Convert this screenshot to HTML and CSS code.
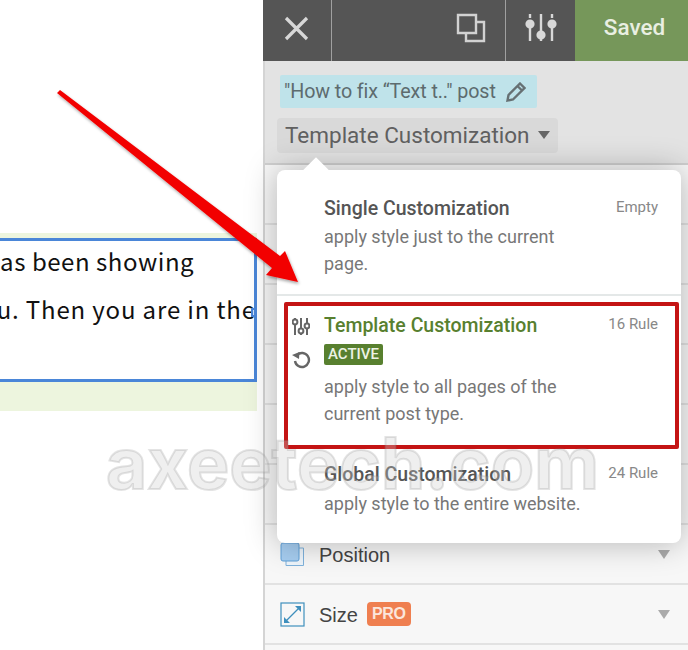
FILE: index.html
```html
<!DOCTYPE html>
<html lang="en">
<head>
    <meta charset="UTF-8">
    <meta name="viewport" content="width=device-width, initial-scale=1.0">
    <title>Template Customization</title>
    <link rel="stylesheet" href="styles.css">
</head>
<body>
    <div class="page">
        <div class="doc">
            <div class="doc-block">
                <div class="doc-box">
                    <p class="doc-line line-one">has been showing</p>
                    <p class="doc-line line-two">you. Then you are in the</p>
                    <span class="doc-handle"></span>
                </div>
            </div>
        </div>

        <div class="panel">
            <div class="topbar">
                <div class="top-btn btn-close">
                    <svg width="26" height="26" viewBox="0 0 26 26"><path d="M3 3 L24 24 M24 3 L3 24" stroke="#d8d8d8" stroke-width="3.2" fill="none"/></svg>
                </div>
                <div class="top-btn btn-layers">
                    <svg width="30" height="30" viewBox="0 0 30 30" fill="none" stroke="#d2d2d2" stroke-width="2.4"><path d="M2 2 H20 V20 H2 Z"/><path d="M20 9 H28 V28 H10 V20"/></svg>
                </div>
                <div class="top-btn btn-sliders">
                    <svg width="32" height="30" viewBox="0 0 32 30" fill="none" stroke="#d8d8d8" stroke-width="2.4"><path d="M5 1 V5 M5 15 V28 M16 1 V19 M16 25 V28 M27 1 V5 M27 15 V28"/><circle cx="5" cy="11" r="3.4" fill="#d8d8d8"/><circle cx="16" cy="22" r="3.4" fill="#d8d8d8"/><circle cx="27" cy="11" r="3.4" fill="#d8d8d8"/></svg>
                </div>
                <div class="btn-saved">Saved</div>
            </div>

            <div class="subhead">
                <div class="post-tag">
                    <span>"How to fix “Text t.." post</span>
                    <svg width="20" height="20" viewBox="0 0 20 20"><path d="M14 1.5 L18.5 6 L7 17.5 L1.5 18.5 L2.5 13 Z M12 4.5 L15.5 8" fill="none" stroke="#667073" stroke-width="2.400"/></svg>
                </div>
                <div class="type-select">
                    <span>Template Customization</span>
                    <i class="tri tri-dark"></i>
                </div>
            </div>

            <div class="rows">
                <div class="row"></div>
                <div class="row"></div>
                <div class="row"></div>
                <div class="row"></div>
                <div class="row"></div>
                <div class="row"></div>
                <div class="row">
                    <svg class="row-icon" width="25" height="25" viewBox="0 0 25 25"><path d="M6 6 H23.5 V23.5 H6 Z" fill="#eef5fb" stroke="#7fb2dc"/><rect x="1" y="1" width="18" height="18" rx="2" fill="#a6cdf0" stroke="#5fa0d8"/></svg>
                    <span class="row-label">Position</span>
                    <i class="tri"></i>
                </div>
                <div class="row">
                    <svg class="row-icon" width="25" height="25" viewBox="0 0 25 25" fill="none" stroke="#3f8fbd"><rect x="1" y="1" width="23" height="23" stroke-width="1.2"/><path d="M4.5 20.5 L20.5 4.5" stroke-width="1.2"/><path d="M4 15 V21 H10 Z M15 4 H21 V10 Z" fill="#3f8fbd" stroke="none"/></svg>
                    <span class="row-label">Size</span>
                    <span class="pro">PRO</span>
                    <i class="tri"></i>
                </div>
                <div class="row"></div>
            </div>

            <div class="menu">
                <span class="menu-caret"></span>
                <div class="menu-item item-single">
                    <div class="item-head">
                        <span class="item-title">Single Customization</span>
                        <span class="item-count">Empty</span>
                    </div>
                    <p class="item-desc">apply style just to the current<br>page.</p>
                </div>
                <div class="menu-item item-template">
                    <div class="item-tools">
                        <svg width="18" height="19" viewBox="0 0 18 19" fill="none" stroke="#666" stroke-width="2"><path d="M3 1 V18 M9 1 V18 M15 1 V18"/><circle cx="3" cy="5" r="2.4" fill="#fff"/><circle cx="9" cy="14" r="2.4" fill="#fff"/><circle cx="15" cy="9" r="2.400" fill="#fff"/></svg>
                        <svg width="19" height="19" viewBox="0 0 19 19" fill="none" stroke="#666" stroke-width="2.4"><path d="M5 5 A7 7 0 1 1 3 11"/><path d="M0 5 L7.500 2 L7 9 Z" fill="#666" stroke="none"/></svg>
                    </div>
                    <div class="item-head">
                        <span class="item-title title-active">Template Customization</span>
                        <span class="item-count">16 Rule</span>
                    </div>
                    <span class="badge">ACTIVE</span>
                    <p class="item-desc desc-active">apply style to all pages of the<br>current post type.</p>
                </div>
                <div class="menu-item item-global">
                    <div class="item-head">
                        <span class="item-title">Global Customization</span>
                        <span class="item-count">24 Rule</span>
                    </div>
                    <p class="item-desc desc-global">apply style to the entire website.</p>
                </div>
            </div>
        </div>

        <div class="red-box"></div>
        <div class="watermark">axeetech.com</div>
        <svg class="arrow" width="688" height="650" viewBox="0 0 688 650">
            <defs>
                <filter id="arrow-shadow" x="-10%" y="-10%" width="120%" height="120%">
                    <feDropShadow dx="1" dy="2" stdDeviation="1.500" flood-color="#000" flood-opacity="0.35"/>
                </filter>
            </defs>
            <path d="M57 93 L60 90 L280 256 L285 251 L298 282 L266 275 L272 268 Z" fill="#f20000" filter="url(#arrow-shadow)"/>
        </svg>
    </div>
</body>
</html>
```

FILE: styles.css
```css
* {
    box-sizing: border-box;
}
body {
    margin: 0;
    background: #fff;
    font-family: Roboto, sans-serif;
    overflow: hidden;
}
p {
    margin: 0;
}
.page {
    position: relative;
    display: flex;
    width: 688px;
    height: 650px;
    overflow: hidden;
}

/* left side, the edited document */
.doc {
    width: 264px;
    padding-top: 233px;
}
.doc-block {
    width: 257px;
    height: 178px;
    padding-top: 5px;
    background: #edf5de;
}
.doc-box {
    position: relative;
    height: 144px;
    background: #fff;
    border: 3px solid #4a86d8;
    border-left: 0;
    overflow: hidden;
}
.doc-line {
    font-family: "Noto Sans CJK KR", "Noto Sans", sans-serif;
    font-size: 24px;
    line-height: 48px;
    letter-spacing: 0.55px;
    color: #111;
    white-space: nowrap;
}
.line-one {
    margin: -4px 0 0 -15px;
}
.line-two {
    margin-left: -32px;
    letter-spacing: 0.85px;
}
.doc-handle {
    position: absolute;
    right: -3px;
    top: 67px;
    width: 6px;
    height: 9px;
    border: 2px solid #4a86d8;
    background: #cfe0f6;
}

/* right side panel */
.panel {
    position: relative;
    flex: 1;
    display: flex;
    flex-direction: column;
    border-left: 2px solid #d4d4d4;
    margin-left: -1px;
}
.topbar {
    flex: none;
    display: flex;
    height: 61px;
    margin-left: -2px;
    background: #555;
}
.top-btn {
    display: flex;
    align-items: center;
    padding-bottom: 6px;
    border-right: 1px solid #a0a0a0;
}
.btn-close {
    width: 69px;
    padding-left: 20px;
}
.btn-layers {
    width: 174px;
    padding-left: 124px;
}
.btn-sliders {
    width: 69px;
    padding-left: 19px;
    border-right: 0;
}
.btn-saved {
    flex: 1;
    display: flex;
    align-items: center;
    justify-content: center;
    padding: 0 0 7px 6px;
    background: #76975a;
    color: #e9efe2;
    font-size: 22.500px;
    font-weight: 500;
}
.subhead {
    flex: none;
    height: 104px;
    padding: 14px 0 0 12px;
    background: #e3e3e3;
    border-bottom: 2px solid #cfcfcf;
}
.post-tag {
    display: flex;
    align-items: center;
    gap: 10px;
    width: 257px;
    height: 33px;
    margin-left: 3px;
    padding-left: 4px;
    background: #bfe3ea;
    border-radius: 2px;
    font-size: 19.700px;
    letter-spacing: -0.1px;
    color: #5d6b6e;
}
.type-select {
    display: flex;
    align-items: center;
    gap: 8px;
    width: 281px;
    height: 35px;
    margin-top: 10px;
    padding: 0 0 2px 8px;
    background: #d9d9d9;
    border-radius: 4px;
    font-size: 22.500px;
    color: #606060;
}
.tri {
    width: 0;
    height: 0;
    border-style: solid;
    border-width: 9px 6px 0;
    border-color: #aaa transparent transparent;
}
.tri-dark {
    border-width: 8px 6px 0;
    border-color: #666 transparent transparent;
}
.rows {
    flex: none;
    background: #f7f7f7;
}
.row {
    display: flex;
    align-items: center;
    height: 60px;
    padding: 0 18px 0 15px;
    background: #f7f7f7;
    border-bottom: 2px solid #e2e2e2;
}
.row-icon {
    margin-right: 14px;
}
.row-label {
    padding-top: 2px;
    font-family: "Liberation Sans", sans-serif;
    font-size: 20px;
    color: #444;
}
.pro {
    margin-left: 9px;
    padding: 3px 5px;
    background: #ef7f50;
    border-radius: 4px;
    color: #fbe6dc;
    font-family: "Liberation Sans", sans-serif;
    font-size: 16px;
    letter-spacing: -0.3px;
    font-weight: 700;
}
.row .tri {
    margin-left: auto;
}

/* dropdown over the rows */
.menu {
    position: absolute;
    left: 12px;
    top: 170px;
    width: 404px;
    height: 373px;
    background: #fff;
    border-radius: 8px;
    box-shadow: 0 0 32px rgba(0, 0, 0, 0.28);
}
.menu-caret {
    position: absolute;
    left: 30px;
    top: -9px;
    width: 18px;
    height: 18px;
    background: #fff;
    transform: rotate(45deg);
}
.menu-item {
    position: relative;
    padding: 27px 23px 0 47px;
    border-bottom: 2px solid #e4e8e8;
}
.item-single {
    height: 126px;
}
.item-template {
    height: 153px;
    padding-top: 18px;
    border-bottom: 0;
}
.item-global {
    padding-top: 14px;
    border-bottom: 0;
}
.item-head {
    display: flex;
    justify-content: space-between;
    align-items: flex-start;
}
.item-title {
    font-size: 19.500px;
    font-weight: 500;
    color: #555;
}
.title-active {
    color: #58802f;
}
.item-count {
    font-size: 15px;
    color: #888;
    padding-top: 1px;
}
.item-desc {
    margin-top: 3px;
    font-size: 18px;
    line-height: 27px;
    color: #777;
}
.desc-active {
    margin-top: 8px;
}
.desc-global {
    margin-top: 4px;
}
.badge {
    display: inline-block;
    margin-top: 7px;
    padding: 1px 4px;
    background: #58802f;
    border-radius: 2px;
    font-size: 15px;
    line-height: 19px;
    font-weight: 500;
    color: #edf3e5;
}
.item-tools {
    position: absolute;
    left: 15px;
    top: 21px;
    display: flex;
    flex-direction: column;
    gap: 14px;
}

/* annotations pasted on the shot */
.red-box {
    position: absolute;
    left: 284px;
    top: 302px;
    width: 395px;
    height: 147px;
    border: 4px solid #c41414;
    border-radius: 2px;
}
.watermark {
    position: absolute;
    left: 106px;
    top: 418px;
    font-family: Inter, sans-serif;
    font-size: 71px;
    line-height: 90px;
    font-weight: 700;
    color: rgba(205, 205, 205, 0.32);
    -webkit-text-stroke: 2px rgba(130, 130, 130, 0.22);
    white-space: nowrap;
}
.arrow {
    position: absolute;
    left: 0;
    top: 0;
}
```
